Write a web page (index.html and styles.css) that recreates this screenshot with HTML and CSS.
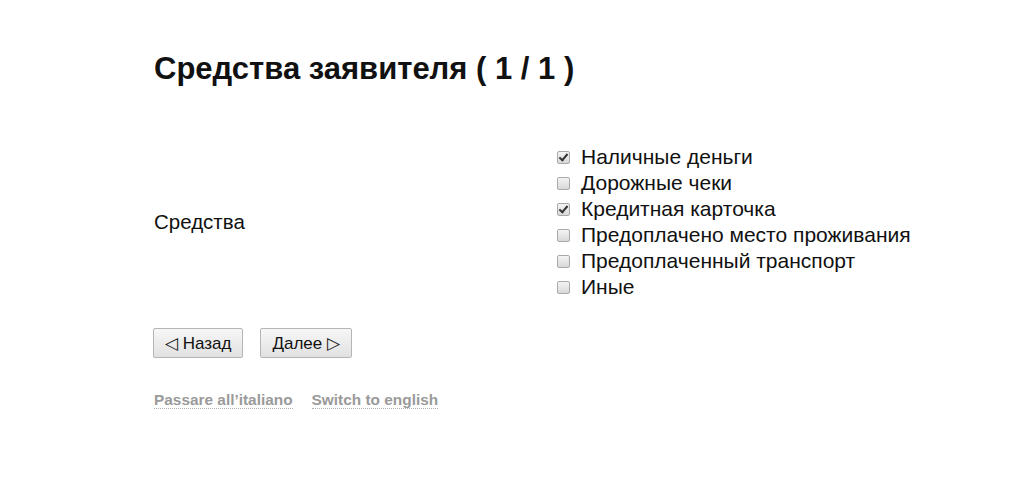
FILE: index.html
```html
<!DOCTYPE html>
<html lang="ru">
<head>
<meta charset="utf-8">
<title>Средства заявителя</title>
<link rel="stylesheet" href="styles.css">
</head>
<body>
<main class="page">
  <h1 class="title">Средства заявителя ( 1 / 1 )</h1>
  <form class="form">
    <div class="field">
      <div class="field-label">Средства</div>
      <div class="options">
        <label class="option"><input type="checkbox" class="cb" checked><span>Наличные деньги</span></label>
        <label class="option"><input type="checkbox" class="cb"><span>Дорожные чеки</span></label>
        <label class="option"><input type="checkbox" class="cb" checked><span>Кредитная карточка</span></label>
        <label class="option"><input type="checkbox" class="cb"><span>Предоплачено место проживания</span></label>
        <label class="option"><input type="checkbox" class="cb"><span>Предоплаченный транспорт</span></label>
        <label class="option"><input type="checkbox" class="cb"><span>Иные</span></label>
      </div>
    </div>
    <div class="buttons">
      <button type="button" class="btn">◁ Назад</button>
      <button type="button" class="btn">Далее ▷</button>
    </div>
  </form>
  <nav class="langs">
    <a href="#" class="lang">Passare all’italiano</a>
    <a href="#" class="lang">Switch to english</a>
  </nav>
</main>
</body>
</html>
```
FILE: styles.css
```css
html, body {
  margin: 0;
  padding: 0;
  background: #fff;
}
body {
  font-family: "Liberation Sans", Arial, sans-serif;
  color: #111;
}
.page {
  padding: 49px 0 0 154px;
}
.title {
  margin: 0;
  font-size: 31px;
  font-weight: bold;
  line-height: 40px;
  color: #111;
}
.form {
  margin-top: 55px;
}
.field {
  display: grid;
  grid-template-columns: 400px auto;
  align-items: center;
}
.field-label {
  font-size: 20.5px;
}
.options {
  display: flex;
  flex-direction: column;
}
.option {
  display: flex;
  align-items: center;
  height: 26px;
  font-size: 21px;
  color: #111;
}
.cb {
  appearance: none;
  -webkit-appearance: none;
  width: 13px;
  height: 13px;
  margin: 0 11px 0 3px;
  border: 1px solid #a9a9a9;
  border-radius: 2px;
  background: linear-gradient(#f4f4f4, #d8d8d8);
  position: relative;
  flex: none;
}
.cb:checked::after {
  content: "";
  position: absolute;
  left: 3px;
  top: 0px;
  width: 3px;
  height: 7px;
  border: solid #333;
  border-width: 0 2px 2px 0;
  transform: rotate(40deg);
}
.buttons {
  display: flex;
  gap: 17px;
  margin-top: 28px;
  margin-left: -1px;
}
.btn {
  font-family: "Liberation Sans", Arial, sans-serif;
  font-size: 17px;
  color: #111;
  height: 30px;
  padding: 0 11px;
  border: 1px solid #b5b5b5;
  border-radius: 2px;
  background: linear-gradient(#f7f7f7, #e1e1e1);
}
.langs {
  display: flex;
  gap: 19px;
  margin-top: 33px;
}
.lang {
  font-size: 15.4px;
  font-weight: bold;
  color: #9a9a9a;
  text-decoration: none;
  border-bottom: 1px dotted #b0b0b0;
  line-height: 17px;
}
```
